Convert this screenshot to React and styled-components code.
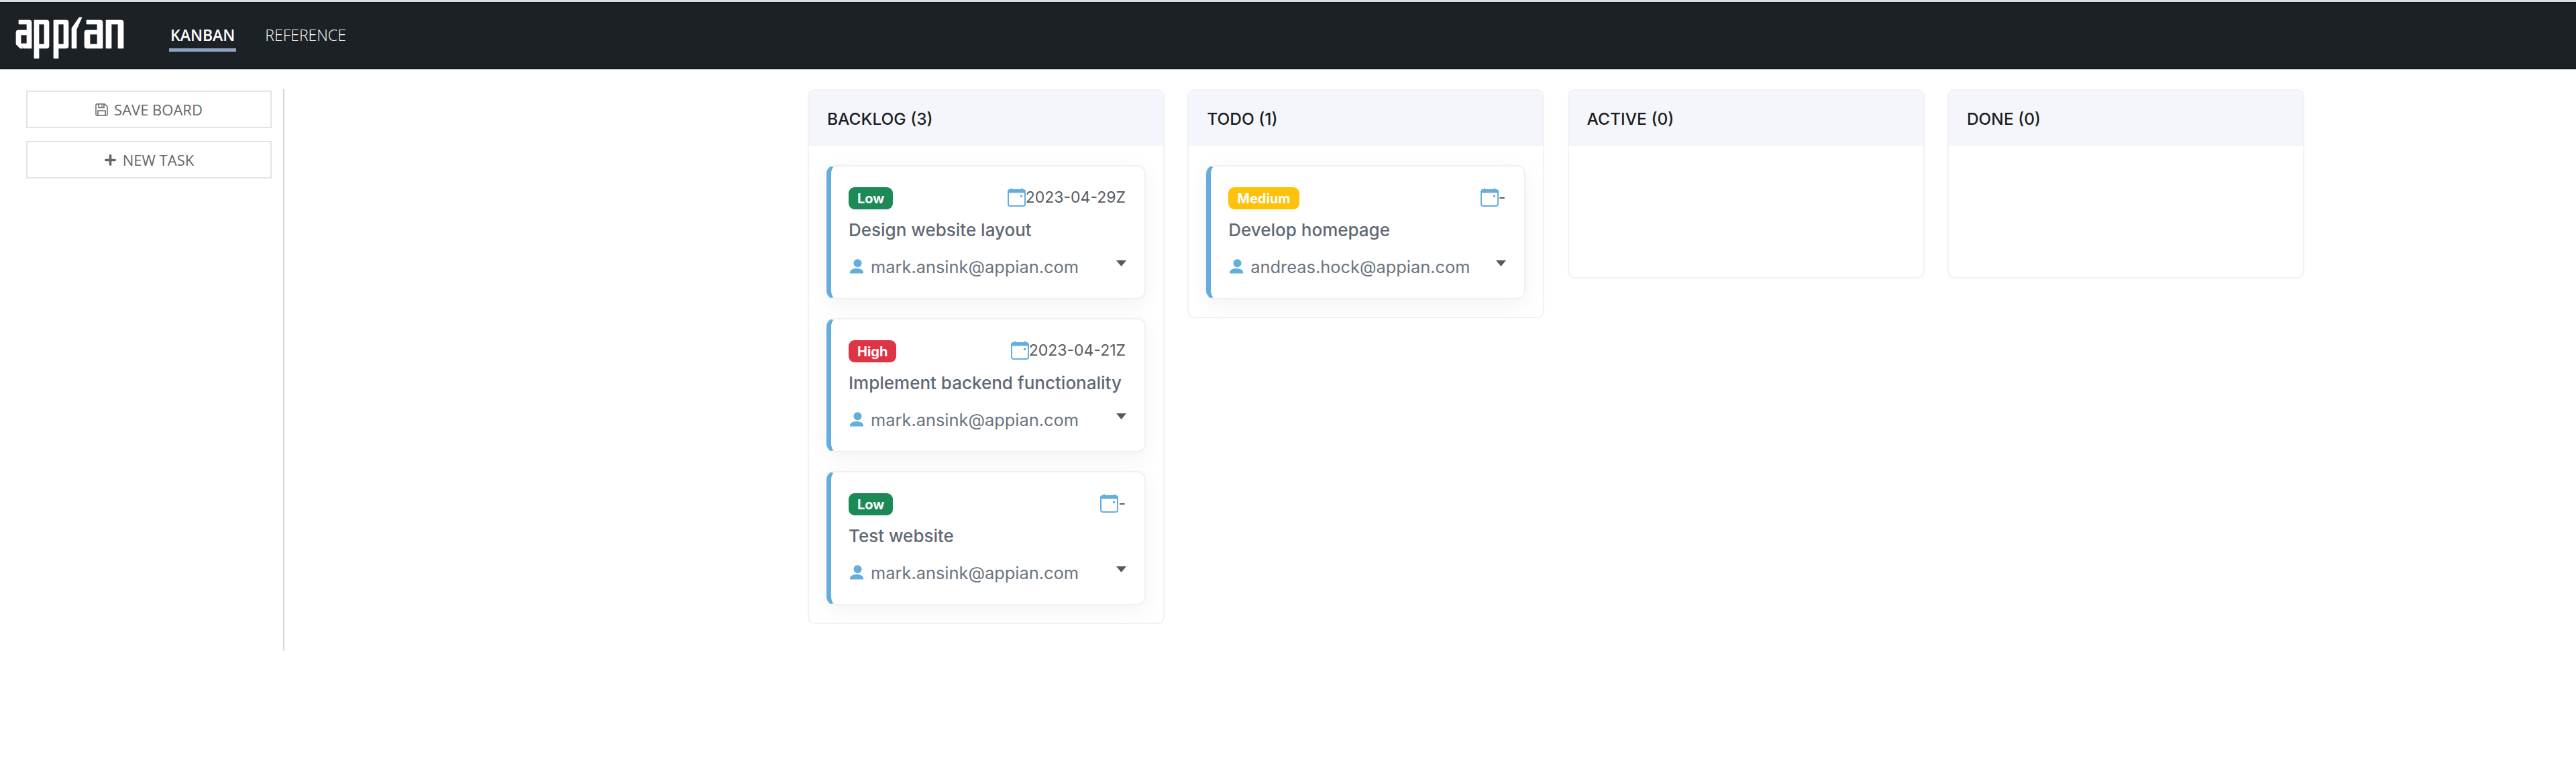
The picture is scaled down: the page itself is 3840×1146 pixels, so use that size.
import React from "react";
import styled, { createGlobalStyle } from "styled-components";
import { FaPlus } from "react-icons/fa";

const Global = createGlobalStyle`
  html, body { margin: 0; padding: 0; background: #fff; }
  * { box-sizing: border-box; }
`;

const Page = styled.div`
  width: 3840px;
  height: 1146px;
  overflow: hidden;
  background: #fff;
  padding-top: 3px;
  box-shadow: inset 0 3px 0 #dcdcdc;
`;

const NavBar = styled.header`
  height: 100px;
  background: #1c2126;
  border-top: 1px solid #0b0d0f;
  border-bottom: 1px solid #0b0d0f;
  box-shadow: 0 1px 1px #cfcfcf;
  display: flex;
  align-items: flex-start;
  font-family: "Open Sans", sans-serif;
`;

const LogoSvg = styled.svg`
  width: 168px;
  height: 66px;
  margin: 19px 0 0 20px;
  flex: none;
  fill: #fff;
  stroke: #fff;
  stroke-width: 0.7;
`;

const NavLinks = styled.nav`
  display: flex;
  margin-left: 64px;
  gap: 41px;
`;

const NavLink = styled.a`
  display: block;
  height: 73px;
  padding: 33px 2px 0;
  font-size: 23px;
  line-height: 31px;
  color: #fff;
  font-weight: ${(p) => (p.$active ? 600 : 300)};
  border-bottom: ${(p) => (p.$active ? "5px solid #8ea2c4" : "5px solid transparent")};
`;

const Body = styled.main`
  display: flex;
  align-items: flex-start;
  padding-top: 30px;
`;

const Sidebar = styled.aside`
  flex: none;
  width: 424px;
  height: 837px;
  padding: 2px 17px 0 39px;
  border-right: 2px solid #d7d7d7;
  display: flex;
  flex-direction: column;
  gap: 19px;
`;

const ActionButton = styled.button`
  width: 366px;
  height: 56px;
  padding: 0;
  background: #fff;
  border: 2px solid #e4e4e4;
  display: flex;
  align-items: center;
  justify-content: center;
  gap: 9px;
  font-family: "Open Sans", sans-serif;
  font-size: 22px;
  color: #666;
`;

const Board = styled.section`
  flex: none;
  margin-left: 780px;
  width: 2232px;
  display: grid;
  grid-template-columns: repeat(4, 532px);
  column-gap: 34.3px;
  align-items: start;
`;

const Column = styled.div`
  border: 2px solid #eff2f7;
  border-radius: 10px;
  background: #fff;
  overflow: hidden;
`;

const ColumnHead = styled.h2`
  margin: 0;
  height: 83px;
  background: #f5f6fb;
  padding: 0 0 0 27px;
  display: flex;
  align-items: center;
  font-family: Inter, sans-serif;
  font-size: 24.5px;
  font-weight: 500;
  color: #1a1e22;
`;

const ColumnBody = styled.div`
  min-height: 195px;
  padding: 28px 26px 26px 26px;
  display: flex;
  flex-direction: column;
  gap: 28px;
  &:empty { padding: 0; }
`;

const Card = styled.article`
  height: 200px;
  background: #fff;
  border: 2px solid #eef0f2;
  border-left: 7px solid #64aede;
  border-radius: 13px;
  box-shadow: 0 8px 32px rgba(0, 0, 0, 0.05);
  padding: 31px 28px 0 26px;
  font-family: Inter, sans-serif;
`;

const CardTop = styled.div`
  display: flex;
  justify-content: space-between;
  align-items: flex-start;
`;

const Badge = styled.span`
  height: 33px;
  border-radius: 9px;
  padding: 0 13px;
  display: inline-flex;
  align-items: center;
  font-size: 20px;
  font-weight: 700;
  color: #fff;
  background: ${(p) => p.$color};
`;

const DateLabel = styled.span`
  display: flex;
  align-items: flex-start;
  font-size: 23px;
  line-height: 28px;
  color: #55595e;
  margin-top: 1px;
`;

const CalendarIcon = styled.svg`
  width: 27px;
  height: 28px;
  flex: none;
`;

const Title = styled.h3`
  margin: 13px 0 0;
  font-size: 26px;
  line-height: 36px;
  font-weight: 500;
  color: #5f6975;
`;

const Assignee = styled.div`
  display: flex;
  align-items: center;
  margin-top: 18px;
  height: 36px;
  font-size: 25.4px;
  color: #6a7480;
`;

const PersonIcon = styled.svg`
  width: 24px;
  height: 24px;
  margin-right: 9px;
  flex: none;
  fill: #64aede;
`;

const Caret = styled.svg`
  width: 15px;
  height: 9px;
  margin-left: auto;
  margin-right: -1px;
  margin-top: -10px;
  fill: #55595e;
  flex: none;
`;

const Logo = () => (
  <LogoSvg viewBox="0 0 168 66" aria-label="appian">
    <path d="M8 7H24Q27 7 27 10V49H15L11 42H20V29H11V42L14 49H10L4 43V25Q4 22 7 22H20V13H8Z" />
    <path fillRule="evenodd" d="M31 7H50Q53 7 53 10V46Q53 49 50 49H38V64H31ZM38 13V43H46V13Z" />
    <path fillRule="evenodd" d="M60 7H79Q82 7 82 10V46Q82 49 79 49H67V64H60ZM67 13V43H75V13Z" />
    <path d="M87 49V19L98 3H102L94 21V49Z" />
    <path fillRule="evenodd" d="M109 7H130Q133 7 133 10V49H109Q106 49 106 46V25Q106 22 109 22H125V13H109ZM114 28V43H125V28Z" />
    <path d="M138 7H161Q164 7 164 10V49H156V13H146V49H138Z" />
  </LogoSvg>
);

const Calendar = () => (
  <CalendarIcon viewBox="0 0 27 28" fill="none">
    <rect x="1" y="3" width="25" height="24" rx="3" stroke="#64aede" strokeWidth="2" />
    <path d="M1 7V5Q1 3 3 3H24Q26 3 26 5V7Z" fill="#64aede" stroke="#64aede" strokeWidth="1.2" />
    <rect x="5" y="0.5" width="2" height="3" fill="#64aede" />
    <rect x="20" y="0.5" width="2" height="3" fill="#64aede" />
    <rect x="19" y="11" width="3" height="3" fill="#64aede" />
  </CalendarIcon>
);

const Person = () => (
  <PersonIcon viewBox="0 0 24 24">
    <path d="M12 1.500a6 6 0 1 1 0 11.600a6 6 0 0 1 0-11.600ZM2 21c0-4.500 6-6 10-6s10 1.500 10 6v1.500H2Z" />
  </PersonIcon>
);

const TaskCard = ({ priority, color, date, title, user }) => (
  <Card>
    <CardTop>
      <Badge $color={color}>{priority}</Badge>
      <DateLabel>
        <Calendar />
        {date}
      </DateLabel>
    </CardTop>
    <Title>{title}</Title>
    <Assignee>
      <Person />
      {user}
      <Caret viewBox="0 0 15 9"><path d="M0 0H15L7.500 9Z" /></Caret>
    </Assignee>
  </Card>
);

const GREEN = "#1b8a57";
const RED = "#dd3446";
const YELLOW = "#ffc10a";

const columns = [
  {
    name: "BACKLOG (3)",
    tasks: [
      { priority: "Low", color: GREEN, date: "2023-04-29Z", title: "Design website layout", user: "mark.ansink@appian.com" },
      { priority: "High", color: RED, date: "2023-04-21Z", title: "Implement backend functionality", user: "mark.ansink@appian.com" },
      { priority: "Low", color: GREEN, date: "-", title: "Test website", user: "mark.ansink@appian.com" },
    ],
  },
  {
    name: "TODO (1)",
    tasks: [{ priority: "Medium", color: YELLOW, date: "-", title: "Develop homepage", user: "andreas.hock@appian.com" }],
  },
  { name: "ACTIVE (0)", tasks: [] },
  { name: "DONE (0)", tasks: [] },
];

const SaveIcon = styled.svg`
  width: 19px;
  height: 19px;
  fill: none;
  stroke: #666;
  stroke-width: 1.5;
`;

export default function App() {
  return (
    <Page>
      <Global />
      <NavBar>
        <Logo />
        <NavLinks>
          <NavLink $active>KANBAN</NavLink>
          <NavLink>REFERENCE</NavLink>
        </NavLinks>
      </NavBar>
      <Body>
        <Sidebar>
          <ActionButton>
            <SaveIcon viewBox="0 0 19 19">
              <path d="M1 2.500Q1 1 2.500 1H14L18 5V16.500Q18 18 16.500 18H2.500Q1 18 1 16.500Z" />
              <path d="M5 1V6.500H13V1M10 2.500V5M4 18V11H15V18" />
            </SaveIcon>
            SAVE BOARD
          </ActionButton>
          <ActionButton>
            <FaPlus size={19} />
            NEW TASK
          </ActionButton>
        </Sidebar>
        <Board>
          {columns.map((c) => (
            <Column key={c.name}>
              <ColumnHead>{c.name}</ColumnHead>
              <ColumnBody>
                {c.tasks.map((t) => (
                  <TaskCard key={t.title} {...t} />
                ))}
              </ColumnBody>
            </Column>
          ))}
        </Board>
      </Body>
    </Page>
  );
}
